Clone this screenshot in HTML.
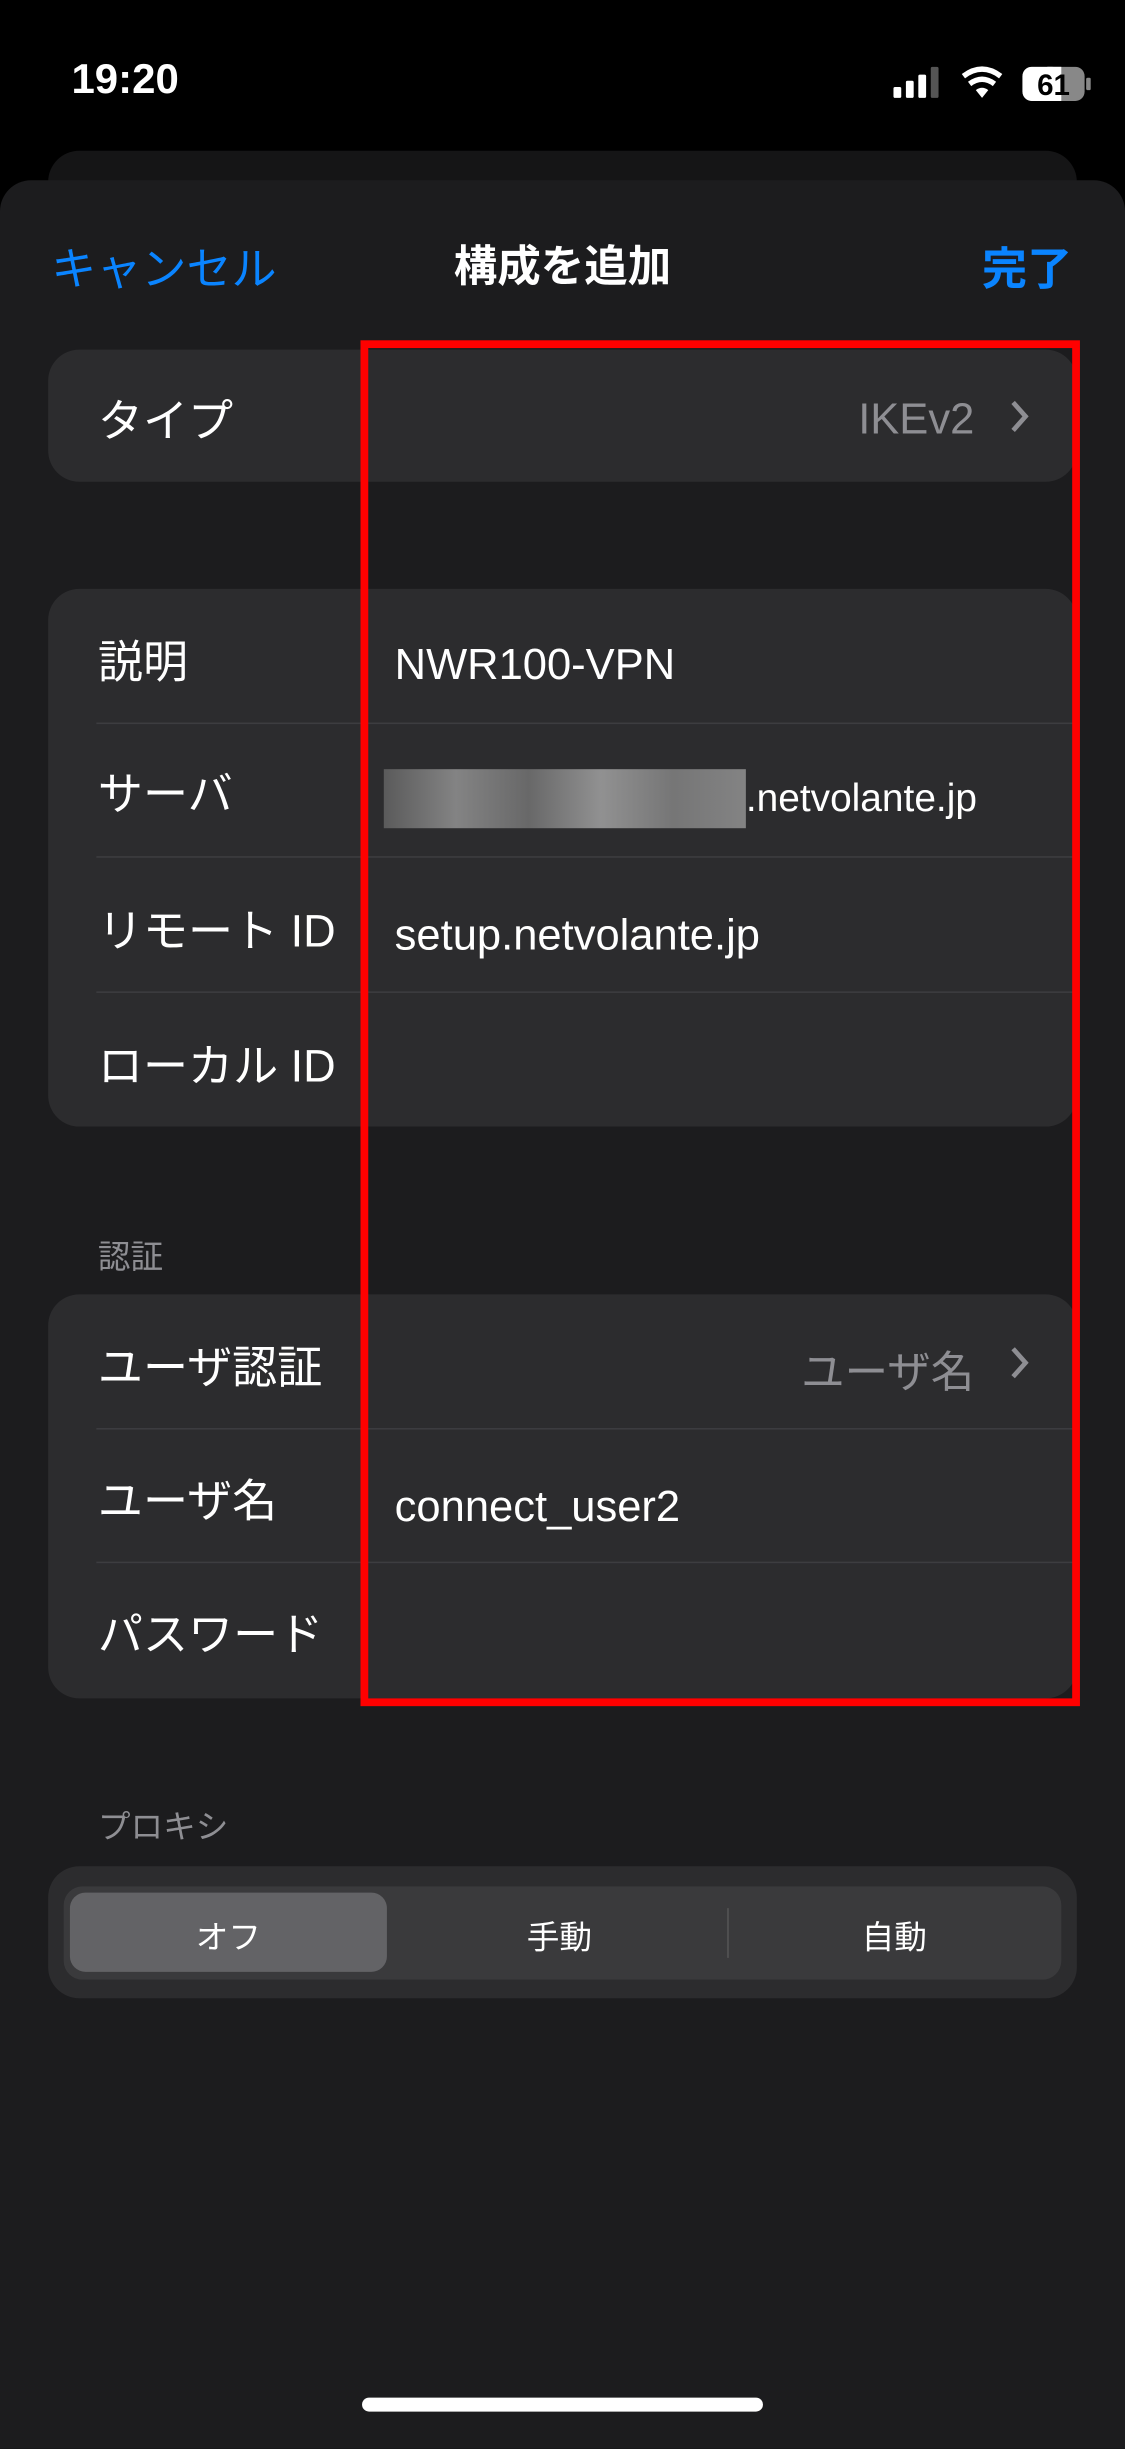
<!DOCTYPE html>
<html><head><meta charset="utf-8"><style>
*{margin:0;padding:0;box-sizing:border-box}
html,body{width:1125px;height:2436px;background:#000;overflow:hidden}
#w{position:absolute;left:0;top:0;width:724px;height:1568px;transform:scale(1.55387);transform-origin:0 0;font-family:"Liberation Sans","Noto Sans CJK JP",sans-serif;color:#fff}
.a{position:absolute}
.card{position:absolute;left:31px;width:662px;background:#2c2c2e;border-radius:20px}
.lab{position:absolute;left:32px;font-size:29px;line-height:1;margin-top:5px}
.val{position:absolute;left:223px;font-size:28px;line-height:1;margin-top:5px}
.sep{position:absolute;left:31px;right:0;height:1px;background:#3d3d40}
.gray{color:#8e8e93}
</style></head><body><div id="w">
<div class="a" style="left:46px;top:36px;font-size:27px;font-weight:bold">19:20</div>
<svg class="a" style="left:574px;top:42px" width="128" height="24" viewBox="0 0 128 24">
<rect x="1" y="14" width="5" height="7" rx="1" fill="#fff"/><rect x="9" y="10" width="5" height="11" rx="1" fill="#fff"/><rect x="17" y="6" width="5" height="15" rx="1" fill="#fff"/><rect x="25" y="1" width="5" height="20" rx="1" fill="#555"/>
<path d="M46 7 Q58 -2 70 7" stroke="#fff" stroke-width="3.5" fill="none"/><path d="M50 12 Q58 6 66 12" stroke="#fff" stroke-width="3.5" fill="none"/><path d="M54 16 L58 21 L62 16 Q58 13 54 16Z" fill="#fff"/>
<rect x="84" y="1" width="40" height="22" rx="6" fill="#888"/><rect x="84" y="1" width="25" height="22" rx="6" fill="#fff"/><rect x="100" y="1" width="9" height="22" fill="#fff"/><rect x="125" y="8" width="3" height="8" rx="1" fill="#888"/>
<text x="104" y="19" font-size="19" font-weight="bold" fill="#000" text-anchor="middle" font-family="Liberation Sans">61</text></svg>
<div class="a" style="left:31px;top:97px;width:662px;height:60px;background:#151516;border-radius:20px"></div>
<div class="a" style="left:0;top:116px;width:724px;height:1460px;background:#1c1c1e;border-radius:20px 20px 0 0"></div>
<div class="a" style="left:33px;top:150px;font-size:29px;color:#0a84ff">キャンセル</div>
<div class="a" style="left:0;width:724px;text-align:center;top:150px;font-size:28px;font-weight:bold">構成を追加</div>
<div class="a" style="left:632px;top:150px;font-size:29px;font-weight:bold;color:#0a84ff">完了</div>

<div class="card" style="top:225px;height:85px">
<div class="lab" style="top:28px">タイプ</div>
<div class="a gray" style="right:66px;top:29px;font-size:28px">IKEv2</div>
<svg class="a" style="left:618px;top:32px" width="14" height="22"><path d="M3 2 L11 11 L3 20" stroke="#8e8e93" stroke-width="3" fill="none"/></svg>
</div>

<div class="card" style="top:379px;height:346px">
<div class="lab" style="top:29px">説明</div><div class="val" style="top:30px">NWR100-VPN</div>
<div class="sep" style="top:86px"></div>
<div class="lab" style="top:114px">サーバ</div>
<div class="a" style="left:216px;top:116px;width:233px;height:38px;background:linear-gradient(90deg,#666,#999 20%,#777 40%,#aaa 60%,#888 80%,#999);opacity:.8"></div>
<div class="a" style="left:449px;top:121px;font-size:25px">.netvolante.jp</div>
<div class="sep" style="top:172px"></div>
<div class="lab" style="top:202px">リモート ID</div><div class="val" style="top:204px">setup.netvolante.jp</div>
<div class="sep" style="top:259px"></div>
<div class="lab" style="top:289px">ローカル ID</div>
</div>

<div class="a gray" style="left:63px;top:793px;font-size:21px">認証</div>
<div class="card" style="top:833px;height:260px">
<div class="lab" style="top:29px">ユーザ認証</div>
<div class="a gray" style="right:66px;top:29px;font-size:28px">ユーザ名</div>
<svg class="a" style="left:618px;top:33px" width="14" height="22"><path d="M3 2 L11 11 L3 20" stroke="#8e8e93" stroke-width="3" fill="none"/></svg>
<div class="sep" style="top:86px"></div>
<div class="lab" style="top:115px">ユーザ名</div><div class="val" style="top:118px">connect_user2</div>
<div class="sep" style="top:172px"></div>
<div class="lab" style="top:201px">パスワード</div>
</div>

<div class="a gray" style="left:63px;top:1160px;font-size:21px">プロキシ</div>
<div class="card" style="top:1201px;height:85px">
<div class="a" style="left:10px;top:13px;width:642px;height:60px;background:#3a3a3c;border-radius:12px"></div>
<div class="a" style="left:14px;top:17px;width:204px;height:51px;background:#636366;border-radius:10px"></div>
<div class="a" style="left:437px;top:27px;width:1px;height:32px;background:#555"></div>
<div class="a" style="left:14px;width:204px;text-align:center;top:30px;font-size:21px">オフ</div>
<div class="a" style="left:222px;width:214px;text-align:center;top:30px;font-size:21px">手動</div>
<div class="a" style="left:437px;width:215px;text-align:center;top:30px;font-size:21px">自動</div>
</div>

<div class="a" style="left:232px;top:219px;width:463px;height:879px;border:5px solid #ff0000"></div>
<div class="a" style="left:233px;top:1543px;width:258px;height:9px;background:#fff;border-radius:5px"></div>
</div></body></html>
